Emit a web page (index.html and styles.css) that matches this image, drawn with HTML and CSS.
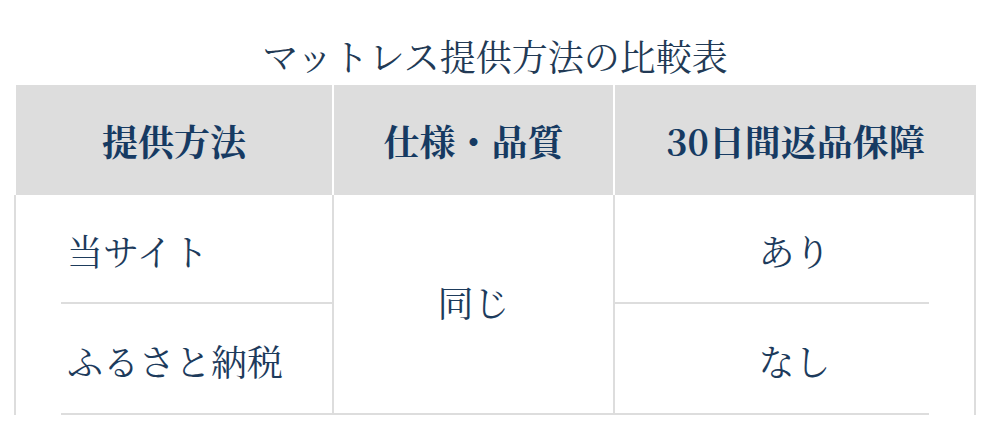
FILE: index.html
```html
<!DOCTYPE html>
<html lang="ja">
<head>
<meta charset="utf-8">
<title>マットレス提供方法の比較表</title>
<link rel="stylesheet" href="styles.css">
</head>
<body>
<div class="wrap">
  <div class="caption">マットレス提供方法の比較表</div>
  <div class="table">
    <div class="th th1">提供方法</div>
    <div class="th th2">仕様・品質</div>
    <div class="th th3">30日間返品保障</div>

    <div class="td c1 r1"><div class="in">当サイト</div></div>
    <div class="td c2 span">同じ</div>
    <div class="td c3 r1"><div class="in">あり</div></div>

    <div class="td c1 r2"><div class="in">ふるさと納税</div></div>
    <div class="td c3 r2"><div class="in">なし</div></div>
  </div>
</div>
</body>
</html>
```
FILE: styles.css
```css
* { box-sizing: border-box; }
html, body { margin: 0; padding: 0; background: #fff; }
body {
  font-family: "Noto Serif CJK JP", "Liberation Serif", "Noto Sans CJK JP", serif;
  color: #1d3b5c;
}
.wrap { padding: 0 14px; width: 990px; }
.caption {
  text-align: center;
  font-size: 36px;
  line-height: 40px;
  height: 85px;
  padding-top: 36px;
  color: #223a55;
}
.table {
  display: grid;
  width: 962px;
  grid-template-columns: 320px 281px 361px;
  grid-template-rows: 110px 109px 111px;
  font-size: 36px;
}
.th {
  background: #dddddd;
  font-weight: 700;
  color: #163a62;
  display: flex;
  align-items: center;
  justify-content: center;
}
.th1 { border-left: 2px solid #fff; border-right: 2px solid #fff; }
.th2 { border-right: 2px solid #fff; }
.td { display: flex; }
.td .in { flex: 1; display: flex; align-items: center; border-bottom: 2px solid #dddddd; padding-top: 4px; }
.c1 { grid-column: 1; border-left: 2px solid #dddddd; border-right: 2px solid #dddddd; }
.c1 .in { margin-left: 45px; padding-left: 6px; }
.c2 {
  grid-column: 2; grid-row: 2 / span 2;
  border-right: 2px solid #dddddd; border-bottom: 2px solid #dddddd;
  align-items: center; justify-content: center; padding-bottom: 6px;
}
.c3 { grid-column: 3; border-right: 2px solid #dddddd; }
.c3 .in { margin-right: 45px; padding-left: 45px; justify-content: center; }
.r1 { grid-row: 2; }
.r2 { grid-row: 3; }
```
